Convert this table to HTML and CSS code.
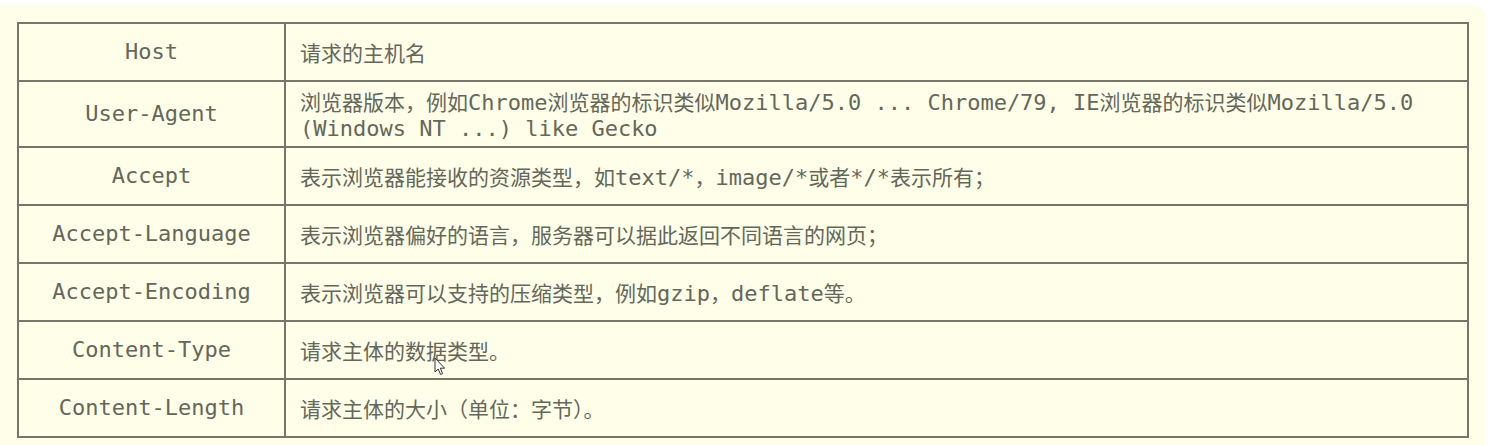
FILE: index.html
```html
<!DOCTYPE html>
<html lang="zh-CN">
<head>
<meta charset="utf-8">
<title>请求头</title>
<link rel="stylesheet" href="styles.css">
</head>
<body>
<div class="panel">
  <div class="table">
    <div class="row">
      <div class="key">Host</div>
      <div class="desc">请求的主机名</div>
    </div>
    <div class="row">
      <div class="key">User-Agent</div>
      <div class="desc">浏览器版本，例如<span class="lt">Chrome</span>浏览器的标识类似<span class="lt">Mozilla/5.0 ... Chrome/79, IE</span>浏览器的标识类似<span class="lt">Mozilla/5.0 (Windows NT ...) like Gecko</span></div>
    </div>
    <div class="row">
      <div class="key">Accept</div>
      <div class="desc">表示浏览器能接收的资源类型，如<span class="lt">text/*</span>，<span class="lt">image/*</span>或者<span class="lt">*/*</span>表示所有；</div>
    </div>
    <div class="row">
      <div class="key">Accept-Language</div>
      <div class="desc">表示浏览器偏好的语言，服务器可以据此返回不同语言的网页；</div>
    </div>
    <div class="row">
      <div class="key">Accept-Encoding</div>
      <div class="desc">表示浏览器可以支持的压缩类型，例如<span class="lt">gzip</span>，<span class="lt">deflate</span>等。</div>
    </div>
    <div class="row">
      <div class="key">Content-Type</div>
      <div class="desc cursor-host">请求主体的数据类型。<svg class="cursor" width="12" height="19" viewBox="0 0 12 19"><path d="M1 1 L1 15 L4.2 12 L6.6 17.5 L8.6 16.6 L6.3 11.2 L10.6 11.2 Z" fill="#fff" stroke="#333" stroke-width="1" stroke-linejoin="round"/></svg></div>
    </div>
    <div class="row">
      <div class="key">Content-Length</div>
      <div class="desc">请求主体的大小（单位：字节）。</div>
    </div>
  </div>
</div>
</body>
</html>
```

FILE: styles.css
```css
html, body {
  margin: 0;
  padding: 0;
  background: #ffffff;
}

body {
  overflow: hidden;
}

.panel {
  margin: 6px 7px 0 -12px;
  padding: 16px 17px 40px 29px;
  background: #fefee9;
  border-radius: 12px;
}

.table {
  width: 1452px;
  box-sizing: border-box;
  border: 2px solid #76776a;
  border-bottom: none;
  font-family: "DejaVu Sans Mono", "Noto Sans CJK SC", monospace;
  color: #646759;
  font-size: 21px;
  line-height: 26px;
}

.row {
  display: grid;
  grid-template-columns: 267px 1fr;
  min-height: 58px;
  box-sizing: border-box;
  border-bottom: 2px solid #76776a;
}

.key {
  display: flex;
  align-items: center;
  justify-content: center;
  border-right: 2px solid #76776a;
  font-size: 22px;
  padding: 6px 0;
}

.desc {
  align-self: center;
  padding: 6px 14px;
  font-family: "Noto Sans CJK SC", sans-serif;
  font-size: 21px;
  line-height: 26px;
}

.lt {
  font-family: "DejaVu Sans Mono", monospace;
  font-size: 22px;
  line-height: 0;
}

.cursor-host {
  position: relative;
}

.cursor {
  position: absolute;
  left: 148px;
  top: 26px;
}
```
